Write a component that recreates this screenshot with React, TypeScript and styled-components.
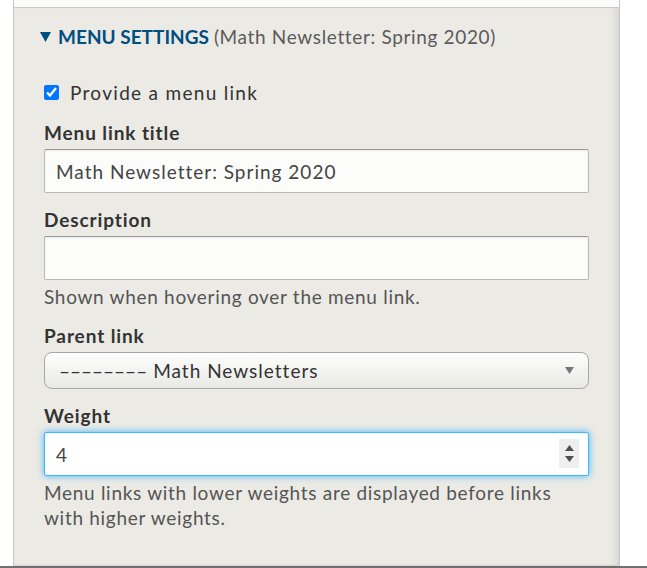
import styled, { createGlobalStyle } from "styled-components";

const GlobalStyle = createGlobalStyle`
  html, body {
    margin: 0;
    padding: 0;
    background: #fff;
  }
  body {
    font-family: Lato, "Liberation Sans", sans-serif;
    color: #333;
  }
  input[type="number"]::-webkit-inner-spin-button,
  input[type="number"]::-webkit-outer-spin-button {
    -webkit-appearance: none;
    margin: 0;
  }
`;

const Page = styled.div`
  height: 568px;
  display: flex;
  flex-direction: column;
  overflow: hidden;
`;

const Sidebar = styled.div`
  margin-left: 13px;
  width: 605px;
  border-left: 1px solid #c8c8c4;
  border-right: 1px solid #c8c8c4;
  flex: 1;
  display: flex;
  flex-direction: column;
`;

const TopBox = styled.div`
  height: 7px;
  background: #fcfcfa;
  border-bottom: 1px solid #c8c8c4;
`;

const Details = styled.section`
  flex: 1;
  background: #ebeae5;
  box-shadow: inset -8px 0 8px -6px rgba(0, 0, 0, 0.12);
  padding: 16px 30px 0 30px;
  border-bottom: 1px solid #d4d3cd;
`;

const Summary = styled.div`
  display: flex;
  align-items: center;
  margin-left: -4px;
  line-height: 25px;
  font-size: 19px;
  margin-bottom: 31px;
`;

const Arrow = styled.svg`
  width: 11px;
  height: 10px;
  margin-right: 7px;
`;

const SummaryTitle = styled.span`
  font-weight: 700;
  color: #004f80;
  text-transform: uppercase;
  margin-right: 5px;
`;

const SummaryInfo = styled.span`
  color: #5b5b5b;
  letter-spacing: 0.65px;
`;

const CheckRow = styled.label`
  display: flex;
  align-items: center;
  gap: 11px;
  font-size: 19px;
  line-height: 25px;
  letter-spacing: 1.3px;
  margin-bottom: 15px;
  input {
    margin: 0;
    width: 15px;
    height: 15px;
  }
`;

const Field = styled.div`
  display: flex;
  flex-direction: column;
  margin-bottom: 14px;
`;

const Label = styled.label`
  font-weight: 700;
  font-size: 19px;
  line-height: 25px;
  letter-spacing: 0.9px;
  margin-bottom: 4px;
  color: #333;
`;

const TextInput = styled.input<{ $focused?: boolean }>`
  box-sizing: border-box;
  width: 545px;
  height: 44px;
  padding: 0 11px;
  font-family: inherit;
  font-size: 19px;
  letter-spacing: 1px;
  color: #444;
  background: ${(p) => (p.$focused ? "#fff" : "#fcfcfa")};
  border: 1px solid ${(p) => (p.$focused ? "#40b6ff" : "#b8b8b8")};
  border-top-color: ${(p) => (p.$focused ? "#40b6ff" : "#999")};
  border-radius: 2px;
  outline: none;
  -moz-appearance: textfield;
  box-shadow: ${(p) =>
    p.$focused
      ? "inset 0 1px 3px rgba(0,0,0,0.05), 0 0 7px #40b6ff"
      : "inset 0 1px 2px rgba(0,0,0,0.08)"};
`;

const NumberWrap = styled.div`
  position: relative;
  width: 545px;
`;

const Spinner = styled.div`
  position: absolute;
  right: 10px;
  top: 7px;
  width: 20px;
  height: 29px;
  background: #efefef;
  display: flex;
  flex-direction: column;
  align-items: center;
  justify-content: space-around;
  padding: 3px 0;
  box-sizing: border-box;
`;

const SelectBox = styled.div`
  box-sizing: border-box;
  width: 545px;
  height: 37px;
  padding: 0 14px;
  display: flex;
  align-items: center;
  justify-content: space-between;
  font-size: 19px;
  letter-spacing: 1px;
  color: #333;
  border: 1px solid #a6a6a6;
  border-radius: 8px;
  background: linear-gradient(#fefefe, #e8e8e4);
  box-shadow: inset 0 1px 0 rgba(255, 255, 255, 0.8);
`;

const Dashes = styled.span`
  letter-spacing: 0;
  margin-right: 6px;
`;

const Help = styled.div`
  font-size: 19px;
  line-height: 25px;
  letter-spacing: 0.7px;
  color: #555;
  margin-top: 4px;
`;

const Rule = styled.div`
  height: 2px;
  background: #6f6f6f;
`;

function App() {
  return (
    <Page>
      <GlobalStyle />
      <Sidebar>
        <TopBox />
        <Details>
          <Summary>
            <Arrow viewBox="0 0 11 10">
              <path d="M0 0 H11 L5.5 10 Z" fill="#004f80" />
            </Arrow>
            <SummaryTitle>Menu settings</SummaryTitle>
            <SummaryInfo>(Math Newsletter: Spring 2020)</SummaryInfo>
          </Summary>
          <CheckRow>
            <input type="checkbox" defaultChecked />
            Provide a menu link
          </CheckRow>
          <Field>
            <Label>Menu link title</Label>
            <TextInput defaultValue="Math Newsletter: Spring 2020" />
          </Field>
          <Field>
            <Label>Description</Label>
            <TextInput />
            <Help>Shown when hovering over the menu link.</Help>
          </Field>
          <Field>
            <Label>Parent link</Label>
            <SelectBox>
              <span>
                <Dashes>––––––––</Dashes>Math Newsletters
              </span>
              <svg width="9" height="7" viewBox="0 0 9 7">
                <path d="M0 0 H9 L4.5 7 Z" fill="#777" />
              </svg>
            </SelectBox>
          </Field>
          <Field>
            <Label>Weight</Label>
            <NumberWrap>
              <TextInput type="number" defaultValue="4" $focused />
              <Spinner>
                <svg width="9" height="6" viewBox="0 0 9 6">
                  <path d="M0 6 H9 L4.5 0 Z" fill="#505050" />
                </svg>
                <svg width="9" height="6" viewBox="0 0 9 6">
                  <path d="M0 0 H9 L4.5 6 Z" fill="#505050" />
                </svg>
              </Spinner>
            </NumberWrap>
            <Help>
              Menu links with lower weights are displayed before links
              <br />
              with higher weights.
            </Help>
          </Field>
        </Details>
      </Sidebar>
      <Rule />
    </Page>
  );
}

export default App;
